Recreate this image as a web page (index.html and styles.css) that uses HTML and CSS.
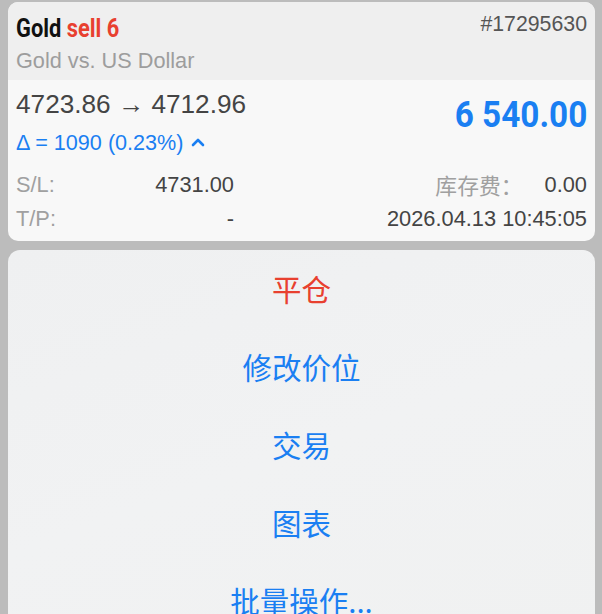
FILE: index.html
```html
<!DOCTYPE html>
<html lang="zh">
<head>
<meta charset="utf-8">
<title>Gold sell 6</title>
<link rel="stylesheet" href="styles.css">
</head>
<body>
<div class="page">
  <section class="card">
    <header class="card-head">
      <div class="head-row">
        <span class="title"><span class="sym">Gold</span> <span class="side">sell 6</span></span>
        <span class="order">#17295630</span>
      </div>
      <div class="subtitle">Gold vs. US Dollar</div>
    </header>
    <div class="card-body">
      <div class="price-grid">
        <div class="price-left">
          <div class="prices">4723.86 → 4712.96</div>
          <div class="delta">Δ = 1090 (0.23%)
            <svg class="chev" width="14" height="10" viewBox="0 0 14 10"><path d="M2 8 L7 3 L12 8" fill="none" stroke="#1a7ff2" stroke-width="2.6" stroke-linecap="round" stroke-linejoin="round"/></svg>
          </div>
        </div>
        <div class="profit">6 540.00</div>
      </div>
      <div class="info-row">
        <div class="pair"><span class="lbl">S/L:</span><span class="val">4731.00</span></div>
        <div class="pair-r"><span class="lbl cjk">库存费：</span><span class="val">0.00</span></div>
      </div>
      <div class="info-row">
        <div class="pair"><span class="lbl">T/P:</span><span class="val">-</span></div>
        <div class="pair-r"><span class="val">2026.04.13 10:45:05</span></div>
      </div>
    </div>
  </section>
  <nav class="sheet">
    <div class="item danger">平仓</div>
    <div class="item">修改价位</div>
    <div class="item">交易</div>
    <div class="item">图表</div>
    <div class="item">批量操作...</div>
  </nav>
</div>
</body>
</html>
```
FILE: styles.css
```css
html, body {
  margin: 0;
  padding: 0;
  background: #bcbcbc;
  overflow: hidden;
}
body {
  font-family: "Liberation Sans", Arial, "Noto Sans CJK SC", sans-serif;
}
.page {
  padding: 2px 7px 0 8px;
  display: flex;
  flex-direction: column;
  gap: 9px;
}
.card {
  border-radius: 10px;
  overflow: hidden;
  background: #f8f8f8;
}
.card-head {
  background: #efefef;
  height: 78px;
  box-sizing: border-box;
  padding: 10px 8px 0 8px;
}
.head-row {
  display: flex;
  justify-content: space-between;
  align-items: flex-start;
  height: 32px;
}
.title {
  display: inline-block;
  font-family: Roboto, "Liberation Sans", sans-serif;
  font-weight: 700;
  font-size: 26px;
  line-height: 32px;
  transform: scaleX(0.84);
  transform-origin: left center;
  white-space: nowrap;
}
.sym { color: #111; }
.side { color: #e8402f; }
.order {
  font-size: 21.3px;
  line-height: 28px;
  color: #555;
  margin-top: -2px;
}
.subtitle {
  font-size: 21.7px;
  line-height: 30px;
  color: #9d9d9d;
  margin-top: 2px;
}
.card-body {
  padding: 8px 8px 5px 8px;
}
.price-grid {
  display: grid;
  grid-template-columns: 1fr auto;
  align-items: start;
}
.prices {
  font-size: 26.2px;
  line-height: 32px;
  color: #444;
}
.delta {
  margin-top: 6px;
  font-size: 21.6px;
  line-height: 34px;
  color: #1a7ff2;
  display: flex;
  align-items: center;
  gap: 7px;
}
.chev { margin-top: -2px; }
.profit {
  font-family: Roboto, "Liberation Sans", sans-serif;
  font-weight: 700;
  font-size: 37px;
  line-height: 40px;
  margin-top: 7px;
  color: #1a7ff2;
  transform: scaleX(0.9);
  transform-origin: right center;
  white-space: nowrap;
}
.info-row {
  display: flex;
  justify-content: space-between;
  font-size: 21.8px;
  line-height: 34px;
}
.price-grid + .info-row { margin-top: 8px; }
.pair {
  width: 218px;
  display: flex;
  justify-content: space-between;
}
.pair-r {
  display: flex;
  gap: 22px;
}
.lbl { color: #a0a0a0; }
.val { color: #444; }
.cjk { font-family: "Noto Sans CJK SC", sans-serif; font-size: 21.8px; }
.sheet {
  border-radius: 12px;
  background: linear-gradient(160deg, #eff0f1 0%, #f1f2f3 50%, #f0f1f1 100%);
  display: flex;
  flex-direction: column;
  height: 400px;
}
.item {
  height: 78px;
  box-sizing: border-box;
  padding-bottom: 2px;
  flex: none;
  display: flex;
  align-items: center;
  justify-content: center;
  font-family: "Noto Sans CJK SC", sans-serif;
  font-size: 29.5px;
  color: #1a7ff2;
}
.item.danger { color: #e8402f; }
```
